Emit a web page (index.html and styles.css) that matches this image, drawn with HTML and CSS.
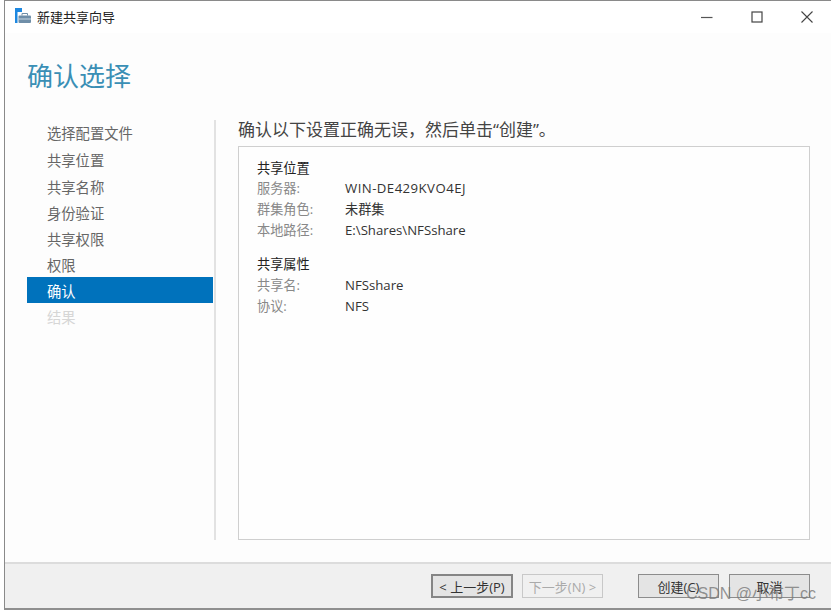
FILE: index.html
```html
<!DOCTYPE html>
<html lang="zh">
<head>
<meta charset="utf-8">
<title>新建共享向导</title>
<link rel="stylesheet" href="styles.css">
</head>
<body>
<div class="window">
  <header class="titlebar">
    <svg class="app-icon" width="16" height="16" viewBox="0 0 16 16">
      <rect x="0" y="0" width="2.5" height="15" fill="#1e88e0"/>
      <rect x="0" y="0" width="7" height="4" fill="#1e88e0"/>
      <rect x="3.5" y="7.5" width="12.5" height="7.5" rx="1" fill="#6f8ea8"/>
      <rect x="3.5" y="10.5" width="12.5" height="1" fill="#c9d6e0"/>
      <path d="M7 7.5V5.5h5.5v2" fill="none" stroke="#6f8ea8" stroke-width="1"/>
    </svg>
    <span class="title">新建共享向导</span>
    <div class="controls">
      <svg class="ctl" width="12" height="12" viewBox="0 0 12 12"><path d="M0 6.5h11.5" stroke="#555" stroke-width="1.2"/></svg>
      <svg class="ctl" width="12" height="12" viewBox="0 0 12 12"><rect x="1" y="1" width="10" height="10" fill="none" stroke="#444" stroke-width="1.2"/></svg>
      <svg class="ctl" width="12" height="12" viewBox="0 0 12 12"><path d="M.5.5l11 11M11.5.5l-11 11" stroke="#444" stroke-width="1.1"/></svg>
    </div>
  </header>
  <div class="banner"><h1>确认选择</h1></div>
  <div class="main">
    <nav class="nav">
      <div class="step">选择配置文件</div>
      <div class="step">共享位置</div>
      <div class="step">共享名称</div>
      <div class="step">身份验证</div>
      <div class="step">共享权限</div>
      <div class="step">权限</div>
      <div class="step active">确认</div>
      <div class="step disabled">结果</div>
    </nav>
    <section class="content">
      <h2>确认以下设置正确无误，然后单击“创建”。</h2>
      <div class="box">
        <h3>共享位置</h3>
        <dl class="props">
          <dt>服务器:</dt><dd class="host">WIN-DE429KVO4EJ</dd>
          <dt>群集角色:</dt><dd>未群集</dd>
          <dt>本地路径:</dt><dd>E:\Shares\NFSshare</dd>
        </dl>
        <h3 class="second">共享属性</h3>
        <dl class="props tight">
          <dt>共享名:</dt><dd>NFSshare</dd>
          <dt>协议:</dt><dd>NFS</dd>
        </dl>
      </div>
    </section>
  </div>
  <footer class="footer">
    <button class="btn default">&lt; 上一步(P)</button>
    <button class="btn off">下一步(N) &gt;</button>
    <button class="btn create">创建(C)</button>
    <button class="btn">取消</button>
  </footer>
</div>
<div class="watermark">CSDN @小布丁cc</div>
</body>
</html>
```

FILE: styles.css
```css
* { box-sizing: border-box; }
html, body { margin: 0; padding: 0; }
body {
  width: 831px;
  height: 612px;
  background: #fff;
  overflow: hidden;
  position: relative;
  font-family: "Open Sans", "Noto Sans CJK SC", sans-serif;
  color: #333;
}
.window {
  margin-left: 4px;
  width: 827px;
  height: 610px;
  border-top: 1px solid #8a8a8a;
  border-left: 1px solid #8a8a8a;
  border-bottom: 2px solid #8f8f8f;
  display: flex;
  flex-direction: column;
  background: #fdfdfd;
}
.titlebar {
  height: 32px;
  flex: none;
  background: #fff;
  display: flex;
  align-items: center;
  padding-left: 10px;
}
.app-icon { margin-right: 6px; margin-top: -2px; }
.title { font-size: 13px; line-height: 18px; color: #222; margin-top: -1px; }
.controls { margin-left: auto; display: flex; gap: 38px; padding-right: 18px; margin-top: -1px; }
.banner { height: 87px; flex: none; padding: 25px 0 0 22px; }
.banner h1 { margin: 0; font-size: 26px; line-height: 36px; font-weight: 400; color: #3a8fb5; }
.main { flex: 1; display: flex; min-height: 0; }
.nav {
  width: 189px;
  height: 420px;
  flex: none;
  border-right: 2px solid #e2e2e2;
  margin-right: 22px;
  margin-left: 22px;
  padding: 1px 0 0;
}
.step { height: 26px; line-height: 29px; padding-left: 20px; font-size: 14.3px; color: #666; margin-right: 1px; }
.step:first-child { line-height: 26px; }
.step:nth-child(2) { line-height: 28px; }
.step.active { background: #0072bc; color: #fff; }
.step.disabled { color: #d6d6d6; }
.content { width: 572px; display: flex; flex-direction: column; height: 420px; }
.content h2 { margin: 0; height: 26px; line-height: 19px; font-size: 17px; font-weight: 400; color: #444; }
.box { flex: 1; border: 1px solid #cfcfcf; padding: 12px 18px; background: #fefefe; }
.box h3 { margin: 0; font-size: 13.2px; line-height: 18px; font-weight: 400; color: #222; }
.box h3.second { margin-top: 14px; }
.props { margin: 1px 0 0; display: grid; grid-template-columns: 88px 1fr; grid-auto-rows: 21px; font-size: 13.2px; line-height: 21px; }
.props.tight { margin-top: 2px; grid-auto-rows: 20.5px; }
.props dt { color: #888; }
.props dd { margin: 0; color: #333; }
.props dd.host { letter-spacing: .45px; }
.footer {
  flex: none;
  height: 46px;
  background: #f0f0f0;
  border-top: 2px solid #dcdcdc;
  display: flex;
  align-items: flex-start;
  padding: 10px 0 0 426px;
}
.btn {
  width: 81px;
  height: 24px;
  margin-right: 10px;
  padding: 0;
  border: 1px solid #8c8c8c;
  background: #e4e4e4;
  font: 13px "Open Sans", "Noto Sans CJK SC", sans-serif;
  color: #333;
}
.btn.default { width: 82px; margin-right: 9px; border: 2px solid #858585; }
.btn.off { border-color: #c8c8c8; background: #f0f0f0; color: #aaa; margin-right: 35px; }
.watermark {
  position: absolute;
  left: 686px;
  top: 585px;
  font-family: "Liberation Sans", "Noto Sans CJK SC", sans-serif;
  font-size: 16px;
  line-height: 18px;
  color: rgba(120,120,120,.8);
}
```
